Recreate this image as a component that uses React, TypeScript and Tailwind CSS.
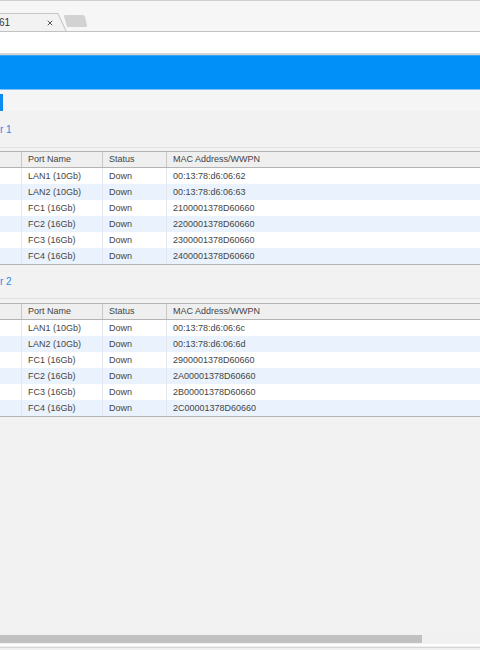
// Storage controller port listing, scrolled page in a browser window

import { X } from 'lucide-react';

interface Port {
  name: string;
  status: string;
  address: string;
}

const CONTROLLERS: { label: string; ports: Port[] }[] = [
  {
    label: 'r 1',
    ports: [
      { name: 'LAN1 (10Gb)', status: 'Down', address: '00:13:78:d6:06:62' },
      { name: 'LAN2 (10Gb)', status: 'Down', address: '00:13:78:d6:06:63' },
      { name: 'FC1 (16Gb)', status: 'Down', address: '2100001378D60660' },
      { name: 'FC2 (16Gb)', status: 'Down', address: '2200001378D60660' },
      { name: 'FC3 (16Gb)', status: 'Down', address: '2300001378D60660' },
      { name: 'FC4 (16Gb)', status: 'Down', address: '2400001378D60660' },
    ],
  },
  {
    label: 'r 2',
    ports: [
      { name: 'LAN1 (10Gb)', status: 'Down', address: '00:13:78:d6:06:6c' },
      { name: 'LAN2 (10Gb)', status: 'Down', address: '00:13:78:d6:06:6d' },
      { name: 'FC1 (16Gb)', status: 'Down', address: '2900001378D60660' },
      { name: 'FC2 (16Gb)', status: 'Down', address: '2A00001378D60660' },
      { name: 'FC3 (16Gb)', status: 'Down', address: '2B00001378D60660' },
      { name: 'FC4 (16Gb)', status: 'Down', address: '2C00001378D60660' },
    ],
  },
];

function TabBar() {
  return (
    <div className="h-[32px] flex-shrink-0 flex items-end bg-[#f6f6f6] border-t border-b border-t-[#cfcfcf] border-b-[#c2c2c2]">
      <div className="w-[58px] h-[18px] flex items-center justify-between pr-[4px] bg-[#f2f2f2] border-t border-[#c6c6c6] text-[10px] text-[#333]">
        <span className="-ml-[1px]">61</span>
        <X size={8} strokeWidth={3} className="text-[#555]" />
      </div>
      {/* slanted tab edge + new tab button */}
      <svg width="32" height="18" viewBox="0 0 32 18" className="block">
        <path d="M0 0 L8 18 L0 18 Z" fill="#f2f2f2" />
        <path d="M0 0.5 L8 18" stroke="#c0c0c0" strokeWidth="1" fill="none" />
        <path d="M6 3 Q6 2 7.5 2 L25 2 Q26.5 2 27 3.5 L29 12.5 Q29 14 27.5 14 L10 14 Q9 14 8.5 12.5 Z" fill="#d2d2d2" />
      </svg>
    </div>
  );
}

function PortTable({ ports }: { ports: Port[] }) {
  return (
    <div className="border-t border-b border-[#b4b4b4] text-[9px] text-[#444]">
      <div className="grid grid-cols-[22px_81px_64px_1fr] h-[16px] bg-[#efefef] border-b border-[#b4b4b4]">
        <div className="border-r border-[#c9c9c9]" />
        <div className="border-r border-[#c9c9c9] pl-[6px] pt-[1px] flex items-center">Port Name</div>
        <div className="border-r border-[#c9c9c9] pl-[6px] pt-[1px] flex items-center">Status</div>
        <div className="pl-[6px] pt-[1px] flex items-center">MAC Address/WWPN</div>
      </div>
      {ports.map((p, i) => (
        <div
          key={p.name}
          className={`grid grid-cols-[22px_81px_64px_1fr] h-[16px] ${
            i % 2 === 1 ? 'bg-[#eaf3fd]' : 'bg-white'
          }`}
        >
          <div className="border-r border-[#e3e8ee]" />
          <div className="border-r border-[#e3e8ee] pl-[6px] pt-[1px] flex items-center">{p.name}</div>
          <div className="border-r border-[#e3e8ee] pl-[6px] pt-[1px] flex items-center">{p.status}</div>
          <div className="pl-[6px] pt-[1px] flex items-center">{p.address}</div>
        </div>
      ))}
    </div>
  );
}

export default function App() {
  return (
    <div className="w-[480px] h-[650px] overflow-hidden flex flex-col bg-[#f2f2f2] font-['Liberation_Sans',Arial,sans-serif]">
      <TabBar />

      {/* address bar strip */}
      <div className="h-[23px] flex-shrink-0 bg-white border-b-2 border-[#d3d3d3]" />

      {/* blue header band */}
      <div className="h-[35px] flex-shrink-0 bg-[#0190f7] border-t border-b border-t-[#3aa4f5] border-b-[#80c2f6]" />

      <div className="flex-1 flex flex-col">
        <div className="h-[21px] pt-[4px] bg-[#f5f5f5]">
          <div className="w-[3px] h-[17px] bg-[#0a8cf0]" />
        </div>

        {CONTROLLERS.map((c, idx) => (
          <div key={c.label}>
            <div
              className={`${
                idx === 0 ? 'h-[37px]' : 'h-[34px]'
              } flex items-center border-b border-[#e2e2e2] text-[10px] text-[#2b89e6]`}
            >
              {c.label}
            </div>
            <div className={idx === 0 ? 'mt-[3px]' : 'mt-[4px]'}>
              <PortTable ports={c.ports} />
            </div>
          </div>
        ))}
      </div>

      {/* horizontal scrollbar */}
      <div className="h-[10px] flex-shrink-0 bg-[#f1f1f1] flex items-center">
        <div className="w-[422px] h-[8px] bg-[#c1c1c1]" />
      </div>
      <div className="h-[6px] flex-shrink-0 bg-[#f0f0f0] border-t-2 border-white">
        <div className="h-[1px] mt-[1px] bg-[#d6d6d6]" />
      </div>
    </div>
  );
}
